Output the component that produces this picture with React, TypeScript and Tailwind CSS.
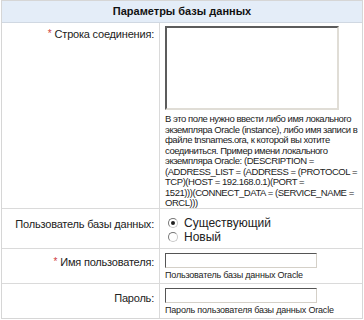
const Req = () => <span className="text-[#d04040] text-[10px] align-top mr-[3px]">*</span>;

const Radio = ({ checked }: { checked?: boolean }) => (
  <span className="inline-flex w-[10px] h-[10px] rounded-full border border-[#c8c8c8] border-t-[#777] border-l-[#777] bg-white items-center justify-center mr-[6px]">
    {checked && <span className="w-[4px] h-[4px] rounded-full bg-[#222]" />}
  </span>
);

const Input = () => (
  <div className="w-[152px] h-[15px] bg-white border border-[#d4d0c8] border-t-[#555] border-l-[#555]" />
);

const descLines = [
  'В это поле нужно ввести либо имя локального',
  'экземпляра Oracle (instance), либо имя записи в',
  'файле tnsnames.ora, к которой вы хотите',
  'соединиться. Пример имени локального',
  'экземпляра Oracle: (DESCRIPTION =',
  '(ADDRESS_LIST = (ADDRESS = (PROTOCOL =',
  'TCP)(HOST = 192.168.0.1)(PORT =',
  '1521)))(CONNECT_DATA = (SERVICE_NAME =',
  'ORCL)))',
];

export default function App() {
  return (
    <div className="w-[364px] h-[320px] bg-white font-['Liberation_Sans',Arial,sans-serif] text-[#222] overflow-hidden">
      <div className="border border-[#d6d6d6] mx-[1px]">
        <div className="h-[22px] bg-[#e4edf8] border-b border-[#d0d8e2] flex items-center justify-center text-[11px] font-bold text-[#111]">
          Параметры базы данных
        </div>
        <div className="flex border-b border-[#dadada] h-[186px]">
          <div className="w-[158px] shrink-0 border-r border-[#dadada] text-right pr-[5px] pt-[3px] text-[11px] tracking-[-0.2px]">
            <Req />Строка соединения:
          </div>
          <div className="pl-[5px] pt-[3px]">
            <div className="w-[174px] h-[84px] bg-white border-2 border-[#e0ddd6] border-t-[#5c5c5c] border-l-[#5c5c5c]" />
            <div className="text-[9.5px] leading-[10.5px] mt-[4px] tracking-[-0.45px] whitespace-nowrap">
              {descLines.map((l) => (
                <div key={l}>{l}</div>
              ))}
            </div>
          </div>
        </div>
        <div className="flex border-b border-[#dadada] h-[40px]">
          <div className="w-[158px] shrink-0 border-r border-[#dadada] text-right pr-[5px] pt-[7px] text-[11px] tracking-[-0.2px]">
            Пользователь базы данных:
          </div>
          <div className="pl-[8px] pt-[7px] text-[12px] flex flex-col">
            <div className="flex items-center h-[14px]"><Radio checked />Существующий</div>
            <div className="flex items-center h-[14px]"><Radio />Новый</div>
          </div>
        </div>
        <div className="flex border-b border-[#dadada] h-[35px]">
          <div className="w-[158px] shrink-0 border-r border-[#dadada] text-right pr-[5px] pt-[5px] text-[11px] tracking-[-0.2px]">
            <Req />Имя пользователя:
          </div>
          <div className="pl-[5px] pt-[4px]">
            <Input />
            <div className="text-[9px] leading-[11px] mt-[2px] tracking-[-0.2px]">Пользователь базы данных Oracle</div>
          </div>
        </div>
        <div className="flex h-[34px]">
          <div className="w-[158px] shrink-0 border-r border-[#dadada] text-right pr-[5px] pt-[6px] text-[11px] tracking-[-0.2px]">
            Пароль:
          </div>
          <div className="pl-[5px] pt-[4px]">
            <Input />
            <div className="text-[9px] leading-[11px] mt-[2px] tracking-[-0.2px]">Пароль пользователя базы данных Oracle</div>
          </div>
        </div>
      </div>
    </div>
  );
}
